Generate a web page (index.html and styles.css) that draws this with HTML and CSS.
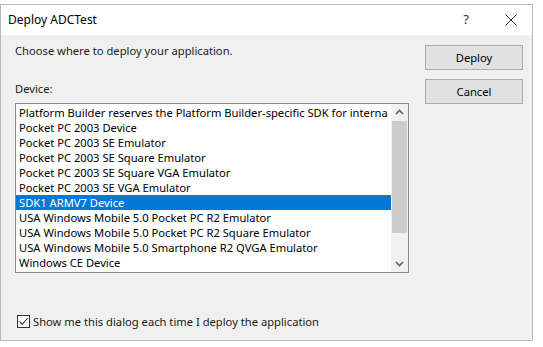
FILE: index.html
```html
<!DOCTYPE html>
<html>
<head>
<meta charset="utf-8">
<link rel="stylesheet" href="styles.css">
</head>
<body>
<div class="dialog">
  <div class="titlebar">
    <span class="title">Deploy ADCTest</span>
    <span class="help">?</span>
    <svg class="close" width="12" height="12" viewBox="0 0 12 12"><path d="M0.5 0.5 L11.5 11.5 M11.5 0.5 L0.5 11.5" stroke="#333" stroke-width="1" fill="none"/></svg>
  </div>
  <div class="body">
    <div class="main">
      <div class="prompt">Choose where to deploy your application.</div>
      <div class="label">Device:</div>
      <div class="listbox">
        <div class="items">
          <div class="item">Platform Builder reserves the Platform Builder-specific SDK for interna</div>
          <div class="item">Pocket PC 2003 Device</div>
          <div class="item">Pocket PC 2003 SE Emulator</div>
          <div class="item">Pocket PC 2003 SE Square Emulator</div>
          <div class="item">Pocket PC 2003 SE Square VGA Emulator</div>
          <div class="item">Pocket PC 2003 SE VGA Emulator</div>
          <div class="item selected">SDK1 ARMV7 Device</div>
          <div class="item">USA Windows Mobile 5.0 Pocket PC R2 Emulator</div>
          <div class="item">USA Windows Mobile 5.0 Pocket PC R2 Square Emulator</div>
          <div class="item">USA Windows Mobile 5.0 Smartphone R2 QVGA Emulator</div>
          <div class="item">Windows CE Device</div>
        </div>
        <div class="scrollbar">
          <svg class="arrow" width="17" height="17" viewBox="0 0 17 17"><path d="M5 10 L8.5 6.5 L12 10" stroke="#606060" stroke-width="1.6" fill="none"/></svg>
          <div class="track"><div class="thumb"></div></div>
          <svg class="arrow" width="17" height="17" viewBox="0 0 17 17"><path d="M5 7 L8.5 10.5 L12 7" stroke="#606060" stroke-width="1.6" fill="none"/></svg>
        </div>
      </div>
      <label class="check">
        <span class="box"><svg width="11" height="11" viewBox="0 0 11 11"><path d="M1.5 5.5 L4.2 8.3 L9.8 2" stroke="#333" stroke-width="1.1" fill="none"/></svg></span>
        <span>Show me this dialog each time I deploy the application</span>
      </label>
    </div>
    <div class="buttons">
      <div class="btn default">Deploy</div>
      <div class="btn">Cancel</div>
    </div>
  </div>
</div>
</body>
</html>
```
FILE: styles.css
```css
html, body {
  margin: 0;
  padding: 0;
  background: #ffffff;
}
body {
  font-family: "Noto Sans", "Open Sans", sans-serif;
  font-size: 11.2px;
  color: #1a1a1a;
}
.dialog {
  width: 533px;
  height: 337px;
  margin-top: 4px;
  border: 1px solid #b8b8b8;
  box-sizing: border-box;
  display: flex;
  flex-direction: column;
  background: #f0f0f0;
}
.titlebar {
  height: 30px;
  background: #ffffff;
  display: flex;
  align-items: center;
  padding: 0 0 0 7px;
  flex-shrink: 0;
}
.title {
  flex: 1;
  font-size: 12px;
  color: #000;
  padding-bottom: 1px;
}
.help {
  font-size: 13px;
  color: #333;
  margin-right: 36px;
  padding-bottom: 2px;
}
.close {
  margin-right: 15px;
}
.body {
  flex: 1;
  display: flex;
  padding: 7px 9px 0 14px;
}
.main {
  width: 394px;
  display: flex;
  flex-direction: column;
}
.prompt {
  height: 16px;
  line-height: 16px;
  margin-top: 1px;
}
.label {
  margin-top: 22px;
  height: 16px;
  line-height: 16px;
}
.listbox {
  margin-top: 6px;
  height: 170px;
  border: 1px solid #828790;
  background: #fff;
  display: flex;
  box-sizing: border-box;
}
.items {
  flex: 1;
  padding-top: 1px;
  overflow: hidden;
}
.item {
  height: 15px;
  line-height: 15px;
  padding-left: 3px;
  white-space: nowrap;
  color: #000;
}
.item.selected {
  background: #0078d7;
  color: #fff;
}
.scrollbar {
  width: 17px;
  background: #f0f0f0;
  display: flex;
  flex-direction: column;
}
.arrow {
  display: block;
  flex-shrink: 0;
}
.track {
  flex: 1;
  padding: 0 1px;
}
.thumb {
  height: 112px;
  background: #cdcdcd;
}
.check {
  margin-top: 41px;
  display: flex;
  align-items: center;
  gap: 3px;
  margin-left: 2px;
}
.box {
  width: 13px;
  height: 13px;
  border: 1px solid #333;
  box-sizing: border-box;
  background: #fff;
  display: flex;
  align-items: center;
  justify-content: center;
}
.box svg {
  display: block;
}
.buttons {
  margin-left: auto;
  margin-top: 3px;
  display: flex;
  flex-direction: column;
  gap: 9px;
}
.btn {
  width: 98px;
  height: 25px;
  box-sizing: border-box;
  border: 1px solid #adadad;
  background: #e1e1e1;
  display: flex;
  align-items: center;
  justify-content: center;
  color: #000;
}
```
